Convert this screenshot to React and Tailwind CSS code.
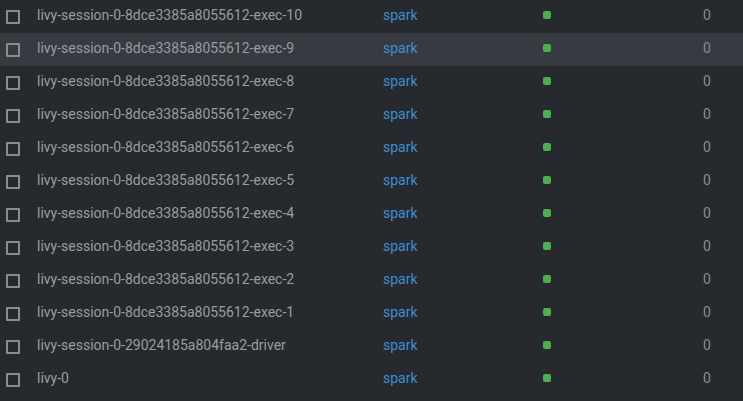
const pods = [
    'livy-session-0-8dce3385a8055612-exec-10',
    'livy-session-0-8dce3385a8055612-exec-9',
    'livy-session-0-8dce3385a8055612-exec-8',
    'livy-session-0-8dce3385a8055612-exec-7',
    'livy-session-0-8dce3385a8055612-exec-6',
    'livy-session-0-8dce3385a8055612-exec-5',
    'livy-session-0-8dce3385a8055612-exec-4',
    'livy-session-0-8dce3385a8055612-exec-3',
    'livy-session-0-8dce3385a8055612-exec-2',
    'livy-session-0-8dce3385a8055612-exec-1',
    'livy-session-0-29024185a804faa2-driver',
    'livy-0',
];

export default function App() {
    return (
        <div
            className="h-[401px] w-[743px] overflow-hidden bg-[#262a2e] text-[14px] leading-[20px]"
            style={{ fontFamily: 'Roboto, "Liberation Sans", sans-serif' }}
        >
            {pods.map((name, index) => (
                <div
                    key={name}
                    className={`flex h-[33px] items-center ${
                        index === 1 ? 'bg-[#373a41]' : ''
                    }`}
                >
                    <div className="ml-[6px] h-[14px] w-[14px] shrink-0 rounded-[1px] border-2 border-[#8c8c8c]" />
                    <div className="mb-[4px] ml-[17px] w-[346px] shrink-0 text-[#9a9c9f]">
                        {name}
                    </div>
                    <div className="mb-[4px] w-[160px] shrink-0 text-[#3d8fd1]">
                        spark
                    </div>
                    <div className="mb-[3px] w-[160px] shrink-0">
                        <div className="h-[8px] w-[8px] rounded-[2px] bg-[#4caf50]" />
                    </div>
                    <div className="mb-[4px] text-[#8a8c8f]">0</div>
                </div>
            ))}
        </div>
    );
}
